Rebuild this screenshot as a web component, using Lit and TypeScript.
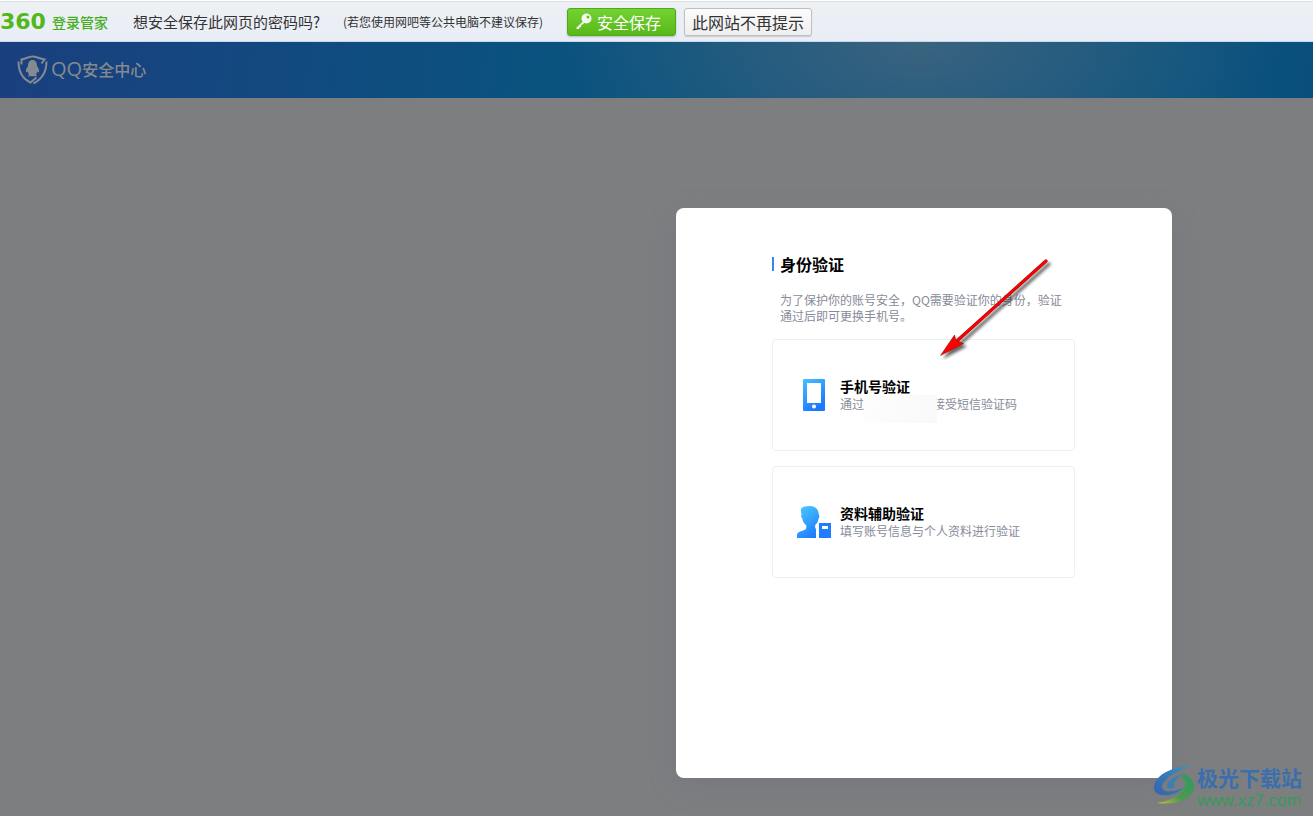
import { LitElement, html, css, svg } from "lit";
import { customElement, property } from "lit/decorators.js";

const phoneIcon = svg`
  <defs>
    <linearGradient id="phone" x1="0" y1="0" x2="0.5" y2="1">
      <stop offset="0" stop-color="#46c0ff" />
      <stop offset="1" stop-color="#1c78ff" />
    </linearGradient>
  </defs>
  <rect x="6" y="0" width="22" height="32" rx="1" fill="url(#phone)" />
  <rect x="10" y="4" width="14" height="20" fill="#fff" />
  <circle cx="17" cy="27.5" r="2" fill="#fff" />`;

const profileIcon = svg`
  <defs>
    <linearGradient id="person" x1="0.3" y1="0" x2="0.8" y2="1">
      <stop offset="0" stop-color="#46c4ff" />
      <stop offset="1" stop-color="#1c78ff" />
    </linearGradient>
  </defs>
  <path fill="url(#person)" d="M4.2 2.4C6 .8 9 0 12.500 0C18 0 21.500 3 21.800 8.500C22.600 9.300 22.600 11 21.600 12.600C21.200 15 20.400 17.200 18.200 19V22.500H19V32H0V29.500C0 26.500 2 25.600 5 24.900C7.500 24.200 9 23.600 9.300 21.800V19.200C6.500 17.500 5.600 15 5.300 12.600C4 11.500 3.800 9.500 4.600 8.300C4 6.500 3.600 4.500 4.200 2.400Z" />
  <path fill="#1f7dff" d="M22 17H34V32H22Z" />
  <rect x="25" y="20" width="6" height="3" fill="#fff" />`;

@customElement("save-bar")
class SaveBar extends LitElement {
  static styles = css`
    :host {
      display: flex;
      align-items: center;
      box-sizing: border-box;
      height: 42px;
      padding-top: 1px;
      background: linear-gradient(#edf1f4, #e9edf6);
      border-top: 1px solid #fff;
      border-bottom: 1px solid #c9d6ee;
      box-shadow: inset 0 1px #dcdfe2;
      color: #333;
      white-space: nowrap;
    }
    .brand {
      display: flex;
      align-items: center;
      width: 133px;
      color: #46ad1c;
      font-size: 14px;
      font-weight: 500;
      gap: 4px;
    }
    .number {
      width: 48px;
      color: #52b81a;
      font: bold 22px/20px "DejaVu Sans", sans-serif;
    }
    .question {
      font-size: 15px;
      width: 210px;
    }
    .note {
      font-size: 12px;
      width: 224px;
    }
    button {
      box-sizing: border-box;
      height: 28px;
      padding: 0 7px;
      border-radius: 3px;
      font: inherit;
      font-size: 16px;
      line-height: 24px;
    }
    .save {
      display: flex;
      align-items: center;
      gap: 5px;
      width: 109px;
      margin-right: 8px;
      border: 1px solid #50a81c;
      background: linear-gradient(#74d233, #57b918);
      color: #fff;
      box-shadow: 0 1px 2px #bbb;
    }
    .dismiss {
      border: 1px solid #bdbfc3;
      background: linear-gradient(#fcfcfc, #efeff0);
      color: #333;
      box-shadow: 0 1px 1px #ccc;
    }
  `;

  render() {
    return html`
      <span class="brand"><span class="number">360</span>登录管家</span>
      <span class="question">想安全保存此网页的密码吗?</span>
      <span class="note">(若您使用网吧等公共电脑不建议保存)</span>
      <button class="save" type="button">
        <svg width="17" height="17" viewBox="0 0 17 17" aria-hidden="true">
          <path d="M8.500 8L1.500 14.500V16H4.200V14.200H6V12.500L10 9.500Z" fill="#f4f8ee" />
          <circle cx="11.500" cy="5.500" r="5" fill="#f4f8ee" />
          <circle cx="13" cy="4" r="1.500" fill="#64c426" />
        </svg>
        安全保存
      </button>
      <button class="dismiss" type="button">此网站不再提示</button>
    `;
  }
}

@customElement("site-header")
class SiteHeader extends LitElement {
  static styles = css`
    :host {
      display: flex;
      align-items: center;
      height: 56px;
      padding-left: 17px;
      background:
        radial-gradient(ellipse 360px 190px at 70% 0, #3b637f, rgba(59, 99, 127, 0) 100%),
        linear-gradient(100deg, #1a3f7f, #0a537f 42%, #0a537f 90%, #0a4f7c);
    }
    .home {
      display: flex;
      align-items: center;
      gap: 3px;
      color: #858a90;
      text-decoration: none;
      font-size: 16px;
      line-height: 22px;
      font-weight: 500;
    }
    .name {
      display: flex;
      align-items: center;
      padding-bottom: 2px;
    }
    .latin {
      font: 20px/22px "Open Sans", sans-serif;
    }
  `;

  render() {
    return html`
      <a class="home" href="#">
        <svg width="31" height="30" viewBox="0 0 31 30" fill="none" aria-hidden="true">
          <path d="M4.500 9.500V4.500C9 3.500 12 1.500 15.500 1.500S22 3.500 27.500 4.500L24.500 8.500" stroke="#858a90" stroke-width="2" />
          <path d="M1.500 6.500C1.500 15 4 23 13.500 27.500L19.500 22.500M29.500 6.500C29.500 15 27 23 16.500 28.500" stroke="#858a90" stroke-width="2" />
          <path d="M15.500 5C12.500 5 11 7.500 11 11C9.500 13 8.500 15 9 17.200C9.600 17.500 10.300 17 10.800 16.500C11 18 11.500 19 12 19.500L11 21.200H20L19 19.500C19.500 19 20 18 20.200 16.500C20.700 17 21.400 17.500 22 17.200C22.500 15 21.500 13 20 11C20 7.500 18.500 5 15.500 5Z" fill="#858a90" />
        </svg>
        <span class="name"><span class="latin">QQ</span>安全中心</span>
      </a>
    `;
  }
}

@customElement("verify-option")
class VerifyOption extends LitElement {
  @property() heading = "";
  @property({ attribute: false }) icon: unknown = null;

  static styles = css`
    :host {
      display: block;
    }
    .card {
      display: flex;
      align-items: center;
      gap: 9px;
      box-sizing: border-box;
      width: 100%;
      height: 112px;
      padding: 0 24px;
      border: 1px solid #efeff1;
      border-radius: 4px;
      background: #fff;
      font: inherit;
      text-align: left;
      cursor: pointer;
    }
    .text {
      display: grid;
      font-size: 12px;
      line-height: 18px;
      color: #878b99;
      white-space: nowrap;
    }
    .heading {
      font-size: 14px;
      font-weight: 700;
      color: #000;
    }
  `;

  render() {
    return html`
      <button class="card" type="button">
        <svg width="34" height="32" viewBox="0 0 34 32" aria-hidden="true">${this.icon}</svg>
        <span class="text">
          <span class="heading">${this.heading}</span>
          <span><slot></slot></span>
        </span>
      </button>
    `;
  }
}

@customElement("app-root")
class AppRoot extends LitElement {
  static styles = css`
    :host {
      position: relative;
      display: flex;
      flex-direction: column;
      min-height: 100vh;
      background: #7d7e80;
      overflow: hidden;
      font-family: "Noto Sans CJK SC", sans-serif;
    }
    main {
      display: flex;
      flex: 1;
      justify-content: flex-end;
      align-items: flex-start;
      padding: 110px 141px 38px;
    }
    .panel {
      position: relative;
      box-sizing: border-box;
      width: 496px;
      min-height: 570px;
      padding: 46px 97px 46px 96px;
      border-radius: 8px;
      background: #fff;
      box-shadow: 0 8px 30px rgba(90, 98, 120, 0.2);
    }
    h1 {
      display: flex;
      align-items: center;
      gap: 6px;
      margin: 0 0 18px;
      font-size: 16px;
      line-height: 20px;
      font-weight: 700;
      color: #000;
    }
    .mark {
      width: 2px;
      height: 14px;
      background: #2f86f6;
    }
    .intro {
      margin: 0 0 15px;
      padding: 0 8px;
      font-size: 12px;
      line-height: 16px;
      color: #878b99;
    }
    .options {
      display: grid;
      gap: 15px;
    }
    .masked {
      position: relative;
      display: inline-block;
      width: 69px;
    }
    .cover {
      position: absolute;
      left: 0;
      top: -14px;
      width: 73px;
      height: 28px;
      background: linear-gradient(100deg, #fdfdfd, #f9f9f9);
    }
    .arrow {
      position: absolute;
      left: 256px;
      top: 44px;
      pointer-events: none;
    }
    .watermark {
      position: absolute;
      right: 11px;
      bottom: 7px;
      display: flex;
      align-items: center;
      gap: 1px;
      color: #3a6eae;
      font-size: 21px;
      line-height: 32px;
      font-weight: 700;
      white-space: nowrap;
    }
    .site {
      display: grid;
    }
    .url {
      color: #389a5c;
      font: 17px/16px "Liberation Sans", sans-serif;
    }
  `;

  render() {
    return html`
      <save-bar></save-bar>
      <site-header></site-header>
      <main>
        <section class="panel">
          <h1><span class="mark"></span>身份验证</h1>
          <p class="intro">为了保护你的账号安全，QQ需要验证你的身份，验证通过后即可更换手机号。</p>
          <div class="options">
            <verify-option heading="手机号验证" .icon=${phoneIcon}
              >通过<span class="masked"><span class="cover"></span></span>接受短信验证码</verify-option
            >
            <verify-option heading="资料辅助验证" .icon=${profileIcon}>填写账号信息与个人资料进行验证</verify-option>
          </div>
          <svg class="arrow" width="126" height="112" viewBox="0 0 126 112" aria-hidden="true">
            <defs>
              <filter id="shade" x="-20%" y="-20%" width="140%" height="140%">
                <feDropShadow dx="3" dy="3" stdDeviation="1.500" flood-color="#000" flood-opacity="0.6" />
              </filter>
            </defs>
            <g filter="url(#shade)">
              <path d="M114 9L26 88" stroke="#7a1010" stroke-width="3.200" stroke-linecap="round" />
              <path d="M114 9L26 88" stroke="#fe0000" stroke-width="2.400" stroke-linecap="round" />
              <path d="M8.500 103.500L22.500 83L24 88.500L31.500 91.500Z" fill="#fe0000" stroke="#7a1010" stroke-width="0.500" />
            </g>
          </svg>
        </section>
      </main>
      <div class="watermark">
        <svg width="42" height="40" viewBox="0 0 42 40" aria-hidden="true">
          <defs>
            <linearGradient id="leaf" x1="1" y1="0" x2="0" y2="1">
              <stop offset="0" stop-color="#2d9a62" />
              <stop offset="0.6" stop-color="#4c9a50" />
              <stop offset="1" stop-color="#c3c03c" />
            </linearGradient>
            <linearGradient id="sky" x1="1" y1="0" x2="0" y2="1">
              <stop offset="0" stop-color="#3b94c0" />
              <stop offset="1" stop-color="#3461ae" />
            </linearGradient>
          </defs>
          <path d="M39 1C24 0 0 8 0 23C0 28 5 31 14 30C22 29 27 26 30 22C24 26 10 29 8 23C7 17 20 5 39 1Z" fill="url(#sky)" />
          <path d="M29 9C20 11 13 17 13 21C13 24 18 24 21 22C18 20 21 14 29 9Z" fill="#3a7fb8" />
          <path d="M27 13C32 14 32 19 30 23C26 31 15 36 3 38C18 40 34 36 38 28C43 20 38 12 30 9Z" fill="url(#leaf)" />
        </svg>
        <span class="site"><span>极光下载站</span><span class="url">www.xz7.com</span></span>
      </div>
    `;
  }
}
